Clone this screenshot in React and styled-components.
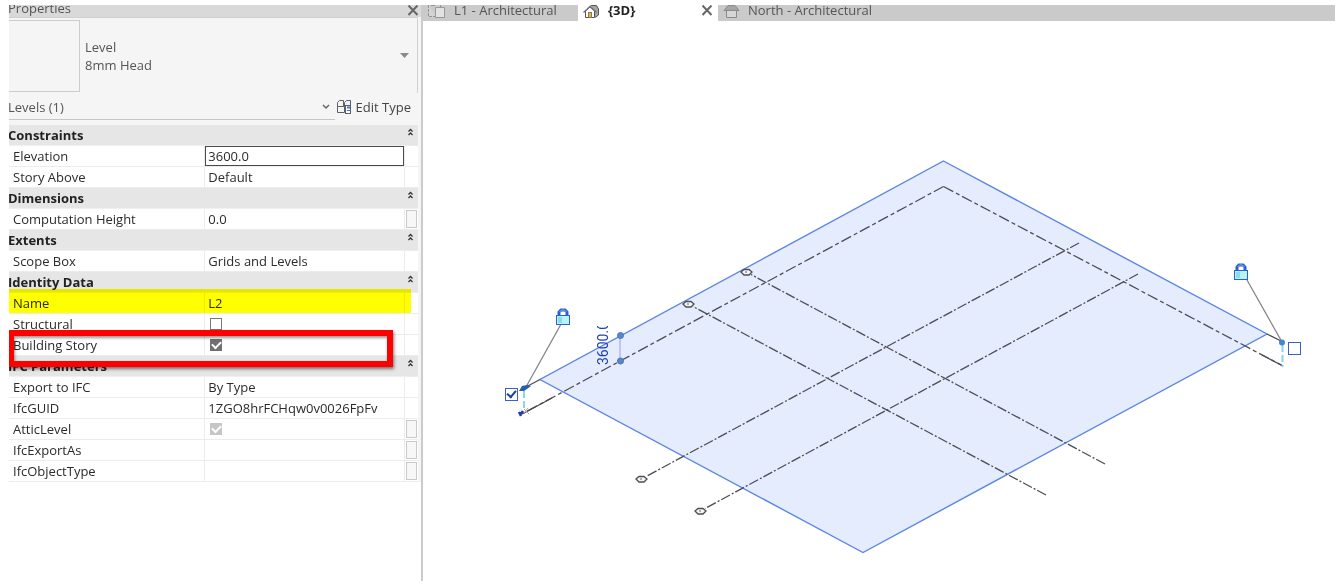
import React, { useState } from 'react'
import styled, { createGlobalStyle } from 'styled-components'

const GlobalStyle = createGlobalStyle`
* {
  box-sizing: border-box;
}
body {
  margin: 0;
  background: #fff;
  font-family: "Open Sans", "Noto Sans", sans-serif;
  font-size: 13px;
  line-height: 18px;
  color: #2b2b2b;
}
button, input {
  font: inherit;
  color: inherit;
  margin: 0;
}
button {
  padding: 0;
  border: 0;
  background: none;
}
`

const Workspace = styled.div`
  display: flex;
  align-items: stretch;
  padding: 5px 7px 6px 9px;
`

const Palette = styled.aside`
  flex: 0 1 414px;
  min-width: 300px;
  display: flex;
  flex-direction: column;
  border-right: 2px solid #cbcbcb;
  overflow: hidden;
`

const PaletteBody = styled.div`
  padding-right: 3px;
  background: #f5f5f5;
`

const PaletteHeader = styled.header`
  display: flex;
  justify-content: space-between;
  align-items: flex-end;
  height: 12px;
  padding-right: 2px;
  overflow: hidden;
  background: #d9d9d9;
  color: #555;
`

const PaletteTitle = styled.h2`
  margin: 0;
  font-size: 13px;
  font-weight: 400;
  line-height: 18px;
  text-indent: -1px;
`

const CloseButton = styled.button`
  display: flex;
  color: #555;
`

const TypeSelector = styled.button`
  display: flex;
  align-items: center;
  width: 100%;
  height: 76px;
  padding-right: 8px;
  border: solid #d0d0d0;
  border-width: 1px 1px 0 0;
  text-align: left;
  color: #555;
`

const Preview = styled.span`
  width: 71px;
  height: 72px;
  margin-right: 5px;
  border: solid #ccc;
  border-width: 1px 1px 1px 0;
`

const TypeName = styled.span`
  flex: 1;
  white-space: pre-line;
`

const FilterRow = styled.div`
  display: flex;
  justify-content: space-between;
  height: 32px;
  padding: 0 7px 5px 0;
  color: #555;
`

const Filter = styled.button`
  flex: 1;
  display: flex;
  align-items: center;
  justify-content: space-between;
  max-width: 326px;
  padding: 2px 5px 0 0;
  border-bottom: 1px solid #c6c6c6;
  text-indent: -1px;
`

const EditType = styled.button`
  display: flex;
  align-items: center;
  gap: 4px;
  color: #444;
`

const TableWrap = styled.div`
  position: relative;
  padding-right: 3px;
  background: #f5f5f5;
`

const Table = styled.table`
  width: 100%;
  table-layout: fixed;
  border-collapse: separate;
  border-spacing: 0;
  background: #fff;
`

const Col = styled.col`
  width: ${(p) => p.$width};
`

const Row = styled.tr`
  height: 21px;
  background: ${(p) => (p.$section ? '#e6e6e6' : '#fff')};
`

const Heading = styled.th`
  height: 21px;
  padding: 0;
  border-bottom: 1px solid #f0f0f0;
  line-height: 20px;
  font-weight: 700;
  text-align: left;
  text-indent: -1px;
  color: #222;
`

const Label = styled.th`
  height: 21px;
  padding: 0 0 0 4px;
  border: solid #ececec;
  border-width: 0 1px 1px 0;
  line-height: 20px;
  font-weight: 400;
  text-align: left;
`

const Cell = styled.td`
  height: 21px;
  padding: ${(p) => (p.$edit ? '0' : '0 0 0 3px')};
  border: solid #ececec;
  border-width: 0 ${(p) => (p.$last ? 0 : 1)}px 1px 0;
  line-height: 20px;
  vertical-align: middle;
`

const Collapse = styled.button`
  display: flex;
  justify-content: center;
  width: 100%;
  height: 20px;
  padding: 3px 2px 0 0;
`

const ValueInput = styled.input`
  display: block;
  width: 100%;
  height: 20px;
  padding: 0 ${(p) => (p.$boxed ? 2 : 3)}px;
  border: 0 solid #4a4a4a;
  border-width: ${(p) => (p.$boxed ? '1px' : '0')};
  background: transparent;
  outline: 0;
`

const Check = styled.input`
  appearance: none;
  display: grid;
  place-items: center;
  width: 12px;
  height: 12px;
  margin-left: 2px;
  border: 1px solid #777;
  background: #fff;
  &:checked {
    border-color: ${(p) => (p.disabled ? '#c6c6c6' : '#707070')};
    background: ${(p) => (p.disabled ? '#c6c6c6' : '#707070')};
  }
  &:checked::before {
    content: "";
    width: 7px;
    height: 4px;
    border: solid #fff;
    border-width: 0 0 2px 2px;
    transform: translateY(-1px) rotate(-45deg);
  }
`

const MoreButton = styled.button`
  display: block;
  width: 11px;
  height: 18px;
  margin: 0 auto 0 1px;
  border: 1px solid #c9c9c9;
  background: #f7f7f7;
`

const Highlight = styled.div`
  position: absolute;
  top: 164px;
  left: 0;
  right: 10px;
  height: 24px;
  background: #ff0;
  mix-blend-mode: multiply;
  pointer-events: none;
`

const RedFrame = styled.div`
  position: absolute;
  top: 205px;
  left: -1px;
  right: 28px;
  height: 37px;
  border: 6px solid #fe0000;
  box-shadow: 1px 2px 3px rgba(0, 0, 0, 0.5), inset 1px 2px 3px rgba(0, 0, 0, 0.4);
  pointer-events: none;
`

const Viewport = styled.main`
  flex: 1;
  min-width: 0;
`

const Tabs = styled.nav`
  display: flex;
  height: 16px;
  overflow: hidden;
`

const Tab = styled.div`
  display: flex;
  align-items: flex-start;
  gap: 4px;
  flex: ${(p) => p.$flex};
  padding: 0 5px;
  background: ${(p) => (p.$active ? '#fff' : '#cacaca')};
  color: ${(p) => (p.$active ? '#222' : '#555')};
`

const TabButton = styled.button`
  display: flex;
  flex: 1;
  gap: 8px;
  height: 16px;
  line-height: 10px;
  font-weight: ${(p) => (p.$active ? 700 : 400)};
  white-space: nowrap;
`

const Canvas = styled.div`
  position: relative;
`

const Drawing = styled.svg`
  display: block;
  width: 100%;
  height: auto;
`

const ExtentCheck = styled.input`
  position: absolute;
  left: ${(p) => p.$left};
  top: ${(p) => p.$top};
  appearance: none;
  display: grid;
  place-items: center;
  width: 13px;
  height: 13px;
  border: 1px solid #3a60d0;
  background: #fff;
  &:checked::before {
    content: "";
    width: 7px;
    height: 4px;
    border: solid #1c3fb0;
    border-width: 0 0 2px 2px;
    transform: translateY(-1px) rotate(-50deg);
  }
`

const sections = [
  {
    title: 'Constraints',
    rows: [
      { label: 'Elevation', value: '3600.0', edit: true, boxed: true },
      { label: 'Story Above', value: 'Default' },
    ],
  },
  {
    title: 'Dimensions',
    rows: [{ label: 'Computation Height', value: '0.0', more: true }],
  },
  {
    title: 'Extents',
    rows: [{ label: 'Scope Box', value: 'Grids and Levels' }],
  },
  {
    title: 'Identity Data',
    rows: [
      { label: 'Name', value: 'L2', edit: true },
      { label: 'Structural', check: true, checked: false },
      { label: 'Building Story', check: true, checked: true },
    ],
  },
  {
    title: 'IFC Parameters',
    rows: [
      { label: 'Export to IFC', value: 'By Type' },
      { label: 'IfcGUID', value: '1ZGO8hrFCHqw0v0026FpFv' },
      { label: 'AtticLevel', check: true, checked: true, disabled: true, more: true },
      { label: 'IfcExportAs', value: '', more: true },
      { label: 'IfcObjectType', value: '', more: true },
    ],
  },
]

const CloseIcon = () => (
  <svg width="12" height="12" viewBox="0 0 12 12" fill="none" stroke="#666" strokeWidth="2">
    <path d="M1.500 0.500l9 9.500M10.500 0.500L1.500 10" />
  </svg>
)

const CollapseIcon = () => (
  <svg width="7" height="8" viewBox="0 0 7 8" fill="none" stroke="#333" strokeWidth="1.300">
    <path d="M1.500 3.500l2-2 2 2M1.500 7l2-2 2 2" />
  </svg>
)

const EditTypeIcon = () => (
  <svg width="15" height="16" viewBox="0 0 15 16" fill="none" stroke="#5a6068">
    <path d="M0.500 7.500V3.500L2.500 1.500H6.500V7.500ZM7.500 7.500V3.500L9.500 1.500H13.500V6M0.500 7.500V13.500H7.500V7.500M6.500 7.500H9" />
    <rect x="8.500" y="6.500" width="5" height="8" fill="#fff" />
    <path d="M10 8.500h3" stroke="#3b78c4" strokeWidth="2" />
    <path d="M10 11.500h3" stroke="#3b78c4" />
  </svg>
)

const PlanIcon = () => (
  <svg width="18" height="14" viewBox="0 0 18 14" fill="none" stroke="#949494">
    <path d="M0.500 0V11.500H8" fill="#d4d4d4" strokeDasharray="3 1" />
    <path d="M3 0.500H7M12.500 0V2" />
    <path d="M7.500 2.500H16.500V12.500H7.500Z" fill="#e2e2e2" stroke="#999" />
  </svg>
)

const HomeIcon = () => (
  <svg width="17" height="14" viewBox="0 0 17 14" fill="none" stroke="#555">
    <path d="M6 2L8.500 0.500H13.500L15.500 4V10L12 12.500" fill="#a5a5a5" />
    <path d="M2.500 6V12.500H11.500V6L7 2Z" fill="#fff" />
    <path d="M0.500 7.500L7 1.500L13.500 7.500" stroke="#777" strokeWidth="1.500" />
    <rect x="5.500" y="7.500" width="3" height="5" fill="#e9b23b" stroke="#8b7a50" />
  </svg>
)

const ElevationIcon = () => (
  <svg width="17" height="14" viewBox="0 0 17 14" fill="none" stroke="#8a8a8a">
    <path d="M3.500 5.500V12.500H13.500V5.500" fill="#d6d6d6" />
    <path d="M1 5.500L5 0.500H12L16 5.500Z" fill="#a5a5a5" />
  </svg>
)

const Lock = ({ x, y }) => (
  <g transform={`translate(${x} ${y})`}>
    <path d="M3 8V4L5 2H9L11 4V8" fill="#fff" stroke="#2a5fd2" strokeWidth="3" />
    <path d="M3.500 4L5.500 2H8.500L10.500 4" fill="none" stroke="#7fb4f2" />
    <rect x="0.500" y="7.500" width="13" height="9" fill="#b4f4fa" stroke="#2a62d4" />
    <rect x="2" y="9" width="4" height="6" fill="#8cdbe8" />
  </g>
)

const gridLines = [
  [746, 272, 1105, 464],
  [688, 304, 1046, 495],
  [641, 479, 1079, 243],
  [700, 511, 1138, 274],
]

function Scene() {
  return (
    <Drawing viewBox="423 21 912 560" role="img" aria-label="3D view of level L2">
      <path d="M943.500 161L1267 334L863 552.500L540 379.500Z" fill="#e5ecfd" stroke="#5c85e2" strokeWidth="1.400" />
      <g fill="none" stroke="#4d4d55" strokeWidth="1.300">
        <path d="M943.500 186.500L522 414" strokeDasharray="11 3 4 3" />
        <path d="M943.500 186.500L1283 366" strokeDasharray="11 3 4 3" />
        {gridLines.map(([x1, y1, x2, y2]) => (
          <g key={x1}>
            <path d={`M${x2} ${y2}L${x1 + 5} ${y1 + (y2 > y1 ? 2.5 : -2.5)}`} strokeDasharray="10 2 2 2" />
            <path d={`M${x1 - 5} ${y1}l3-2.500h5l3 2.500l-3 3h-5z`} fill="#f4f4f4" />
            <path d={`M${x1 - 1} ${y1}h2`} stroke="#999" />
          </g>
        ))}
        <path d="M524 388L540 379.500M1267 334L1283 342M524 413L552 398M1262 355L1283 366" />
      </g>
      <g fill="none" stroke="#858585" strokeWidth="1.300">
        <path d="M560.500 325L526 387M1247 280L1282 342" />
      </g>
      <path d="M524 391V411M1282.500 345V367" stroke="#8bd4ea" strokeWidth="2" strokeDasharray="7 3" />
      <path d="M519 391l3-5 5-1 4 1-4 3-3 2z" fill="#285fa8" />
      <path d="M520 415l3-4M519 412l2 4" stroke="#1c3fb0" strokeWidth="2.500" />
      <path d="M524 413l4-5M524 409l5 5" stroke="#aaa" strokeWidth="1" />
      <circle cx="1282" cy="342.500" r="3" fill="#4a85c8" />
      <path d="M620 335V361" stroke="#8aa7eb" />
      <g fill="#5288d9" stroke="#5273a8">
        <circle cx="620.500" cy="335.500" r="3" />
        <circle cx="620.500" cy="361" r="3" />
      </g>
      <clipPath id="dim">
        <rect x="594" y="326" width="18" height="42" />
      </clipPath>
      <g clipPath="url(#dim)">
        <text transform="translate(608 365) rotate(-90)" fontFamily="Roboto, sans-serif" fontSize="14" fill="#1d3fae">
          3600.0
        </text>
      </g>
      <Lock x={556} y={308} />
      <Lock x={1234} y={263} />
    </Drawing>
  )
}

function Properties() {
  const [closed, setClosed] = useState({})

  const toggle = (title) => setClosed({ ...closed, [title]: !closed[title] })

  return (
    <Palette>
      <PaletteHeader>
        <PaletteTitle>Properties</PaletteTitle>
        <CloseButton aria-label="Close properties">
          <CloseIcon />
        </CloseButton>
      </PaletteHeader>
      <PaletteBody>
        <TypeSelector>
          <Preview />
          <TypeName>{'Level\n8mm Head'}</TypeName>
          <svg width="9" height="5" viewBox="0 0 9 5">
            <path d="M0 0H9L4.500 5Z" fill="#8a8a8a" />
          </svg>
        </TypeSelector>
        <FilterRow>
          <Filter>
            Levels (1)
            <svg width="8" height="6" viewBox="0 0 8 6" fill="none" stroke="#666" strokeWidth="1.500">
              <path d="M1 1l3 3 3-3" />
            </svg>
          </Filter>
          <EditType>
            <EditTypeIcon />
            Edit Type
          </EditType>
        </FilterRow>
      </PaletteBody>
      <TableWrap>
        <Table>
          <colgroup>
            <Col $width="48%" />
            <Col />
            <Col $width="13px" />
          </colgroup>
          {sections.map((s) => (
            <tbody key={s.title}>
              <Row $section>
                <Heading colSpan={2} scope="rowgroup">{s.title}</Heading>
                <Cell $edit $last>
                  <Collapse aria-label={`Collapse ${s.title}`} onClick={() => toggle(s.title)}>
                    <CollapseIcon />
                  </Collapse>
                </Cell>
              </Row>
              {!closed[s.title] &&
                s.rows.map((r) => (
                  <Row key={r.label}>
                    <Label scope="row">
                      <label htmlFor={r.edit || r.check ? r.label : undefined}>{r.label}</label>
                    </Label>
                    <Cell $edit={r.edit}>
                      {r.edit && <ValueInput id={r.label} defaultValue={r.value} $boxed={r.boxed} />}
                      {r.check && (
                        <Check type="checkbox" id={r.label} defaultChecked={r.checked} disabled={r.disabled} />
                      )}
                      {!r.edit && !r.check && r.value}
                    </Cell>
                    <Cell $edit $last>
                      {r.more && <MoreButton aria-label={`${r.label} options`} />}
                    </Cell>
                  </Row>
                ))}
            </tbody>
          ))}
        </Table>
        <Highlight />
        <RedFrame />
      </TableWrap>
    </Palette>
  )
}

function App() {
  return (
    <>
      <GlobalStyle />
      <Workspace>
        <Properties />
        <Viewport>
          <Tabs>
            <Tab $flex="0 1 155px">
              <TabButton>
                <PlanIcon />
                L1 - Architectural
              </TabButton>
            </Tab>
            <Tab $active $flex="0 1 140px">
              <TabButton $active>
                <HomeIcon />
                {'{3D}'}
              </TabButton>
              <CloseButton aria-label="Close {3D}">
                <CloseIcon />
              </CloseButton>
            </Tab>
            <Tab $flex="1">
              <TabButton>
                <ElevationIcon />
                North - Architectural
              </TabButton>
            </Tab>
          </Tabs>
          <Canvas>
            <Scene />
            <ExtentCheck type="checkbox" defaultChecked aria-label="Show left end" $left="9%" $top="65.5%" />
            <ExtentCheck type="checkbox" aria-label="Show right end" $left="94.9%" $top="57.3%" />
          </Canvas>
        </Viewport>
      </Workspace>
    </>
  )
}

export default App
